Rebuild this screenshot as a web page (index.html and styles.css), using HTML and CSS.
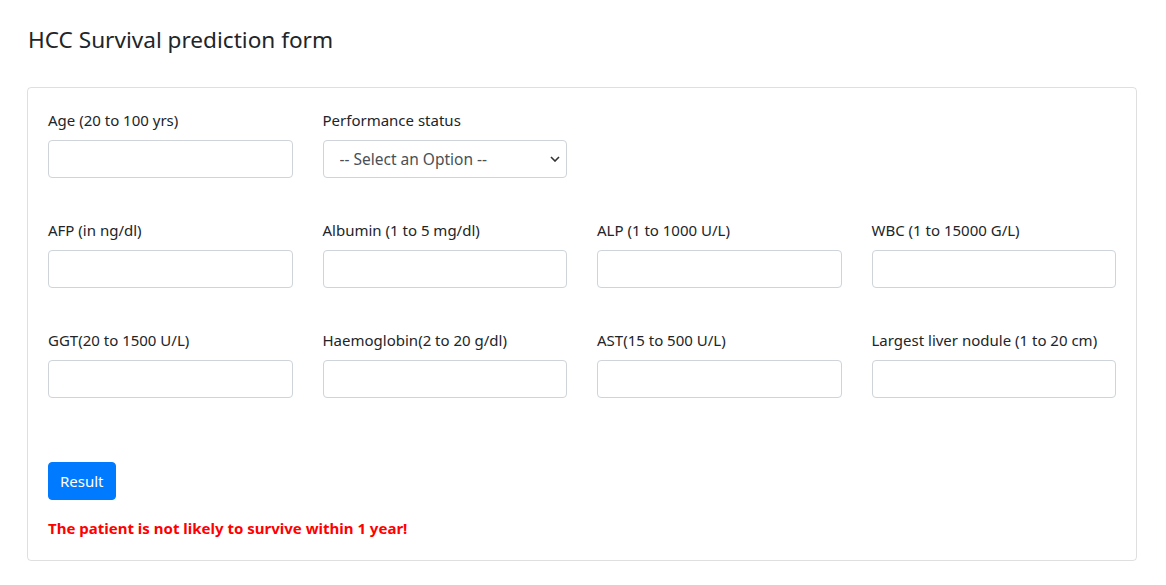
FILE: index.html
```html
<!DOCTYPE html>
<html lang="en">
<head>
<meta charset="utf-8">
<title>HCC Survival prediction form</title>
<link rel="stylesheet" href="styles.css">
</head>
<body>
<div class="page">
  <h4 class="title">HCC Survival prediction form</h4>
  <div class="card">
    <form class="form">
      <div class="row">
        <div class="field"><label>Age (20 to 100 yrs)</label><input class="control" type="text"></div>
        <div class="field"><label>Performance status</label>
          <select class="control select"><option>-- Select an Option --</option></select>
        </div>
      </div>
      <div class="row">
        <div class="field"><label>AFP (in ng/dl)</label><input class="control" type="text"></div>
        <div class="field"><label>Albumin (1 to 5 mg/dl)</label><input class="control" type="text"></div>
        <div class="field"><label>ALP (1 to 1000 U/L)</label><input class="control" type="text"></div>
        <div class="field"><label>WBC (1 to 15000 G/L)</label><input class="control" type="text"></div>
      </div>
      <div class="row">
        <div class="field"><label>GGT(20 to 1500 U/L)</label><input class="control" type="text"></div>
        <div class="field"><label>Haemoglobin(2 to 20 g/dl)</label><input class="control" type="text"></div>
        <div class="field"><label>AST(15 to 500 U/L)</label><input class="control" type="text"></div>
        <div class="field"><label>Largest liver nodule (1 to 20 cm)</label><input class="control" type="text"></div>
      </div>
      <div class="actions"><button type="button" class="btn">Result</button></div>
      <p class="result">The patient is not likely to survive within 1 year!</p>
    </form>
  </div>
</div>
</body>
</html>
```

FILE: styles.css
```css
* { box-sizing: border-box; }
html, body {
  margin: 0;
  padding: 0;
  background: #fff;
  font-family: "Noto Sans", "Open Sans", sans-serif;
  font-size: 15px;
  color: #212529;
}
.page {
  padding: 25px 29px 0 27px;
}
.title {
  margin: 0 0 33px 1px;
  font-size: 22.6px;
  font-weight: 400;
  line-height: 29px;
}
.card {
  border: 1px solid rgba(0,0,0,.125);
  border-radius: 4px;
  padding: 20px 20px 20px 20px;
}
.form { margin: 0; }
.row {
  display: grid;
  grid-template-columns: repeat(4, 1fr);
  column-gap: 30px;
  margin-bottom: 40px;
}
.field {
  display: flex;
  flex-direction: column;
}
.field label {
  line-height: 24px;
  margin-bottom: 8px;
}
.control {
  height: 38px;
  width: 100%;
  border: 1px solid #ced4da;
  border-radius: 4px;
  padding: 6px 12px;
  font-family: inherit;
  font-size: 15px;
  color: #495057;
  background: #fff;
}
.select {
  appearance: none;
  -webkit-appearance: none;
  padding-left: 16px;
  font-size: 15.5px;
  background-image: url("data:image/svg+xml,%3Csvg xmlns='http://www.w3.org/2000/svg' width='10' height='6' viewBox='0 0 10 6'%3E%3Cpath d='M1 1l4 4 4-4' fill='none' stroke='%23333' stroke-width='1.6'/%3E%3C/svg%3E");
  background-repeat: no-repeat;
  background-position: right 6px center;
}
.actions {
  margin-top: 64px;
}
.btn {
  height: 38px;
  padding: 0 11px;
  border: 1px solid #007bff;
  border-radius: 4px;
  background: #007bff;
  color: #fff;
  font-family: inherit;
  font-size: 15px;
}
.result {
  margin: 16px 0 0 0;
  line-height: 24px;
  color: #ff0000;
  font-weight: 700;
}
```
